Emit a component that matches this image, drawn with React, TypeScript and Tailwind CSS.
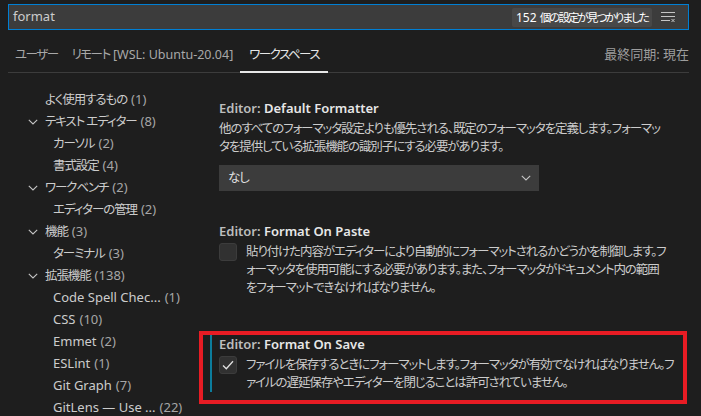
import React from 'react';

type TocItem = {
  label: string;
  count: string;
  level: 1 | 2;
  open?: boolean;
};

const toc: TocItem[] = [
  { label: 'よく使用するもの', count: '(1)', level: 1 },
  { label: 'テキスト エディター', count: '(8)', level: 1, open: true },
  { label: 'カーソル', count: '(2)', level: 2 },
  { label: '書式設定', count: '(4)', level: 2 },
  { label: 'ワークベンチ', count: '(2)', level: 1, open: true },
  { label: 'エディターの管理', count: '(2)', level: 2 },
  { label: '機能', count: '(3)', level: 1, open: true },
  { label: 'ターミナル', count: '(3)', level: 2 },
  { label: '拡張機能', count: '(138)', level: 1, open: true },
  { label: 'Code Spell Chec...', count: ' (1)', level: 2 },
  { label: 'CSS', count: '(10)', level: 2 },
  { label: 'Emmet', count: '(2)', level: 2 },
  { label: 'ESLint', count: '(1)', level: 2 },
  { label: 'Git Graph', count: '(7)', level: 2 },
  { label: 'GitLens — Use ...', count: '(22)', level: 2 },
];

// condensed Japanese run, closer to the narrow kana of the original UI font
const J = ({ children }: { children: React.ReactNode }) => (
  <span className="text-[12.5px] tracking-[-1.1px] [font-feature-settings:'palt']">{children}</span>
);

const TabJ = ({ children }: { children: React.ReactNode }) => (
  <span className="text-[12.5px] tracking-[-1.5px] [font-feature-settings:'palt']">{children}</span>
);

const isLatin = (s: string) => /^[\x00-\x7f—.]+$/.test(s);

const Chevron = ({ className }: { className?: string }) => (
  <svg width="10" height="6" viewBox="0 0 10 6" className={className}>
    <path d="M0.8 0.8 L5 5 L9.2 0.8" fill="none" stroke="#c5c5c5" strokeWidth="1.1" />
  </svg>
);

const ClearIcon = () => (
  <svg width="16" height="16" viewBox="0 0 16 16">
    <g stroke="#c5c5c5" strokeWidth="1" fill="none">
      <path d="M1 3.5 H15" />
      <path d="M1 7.5 H15" />
      <path d="M1 11.5 H10" />
      <path d="M11.5 10 L14.5 13 M14.5 10 L11.5 13" />
    </g>
  </svg>
);

const Checkbox = ({ checked }: { checked?: boolean }) => (
  <div className="w-[18px] h-[18px] shrink-0 rounded-[3px] bg-[#313131] border border-[#3c3c3c] flex items-center justify-center">
    {checked && (
      <svg width="14" height="14" viewBox="0 0 14 14">
        <path d="M2 7.5 L5.3 10.8 L12 3.2" fill="none" stroke="#e0e0e0" strokeWidth="1.3" />
      </svg>
    )}
  </div>
);

const Title = ({ name }: { name: string }) => (
  <div className="leading-[18px] font-semibold whitespace-nowrap">
    <span className="text-[#bdbdbd]">Editor: </span>
    <span className="text-[#e7e7e7]">{name}</span>
  </div>
);

const Lines = ({ lines }: { lines: string[] }) => (
  <div className="text-[#cccccc] leading-[18px] whitespace-nowrap text-[12.5px] tracking-[-1.1px] [font-feature-settings:'palt']">
    {lines.map((l) => (
      <div key={l}>{l}</div>
    ))}
  </div>
);

export default function App() {
  return (
    <div className="w-[701px] h-[416px] overflow-hidden bg-[#1e1e1e] text-[13px] text-[#cccccc] font-['Noto_Sans','Noto_Sans_CJK_JP',sans-serif]">
      <div className="pt-[4px] pl-[8px] pr-[12px]">
        <div className="h-[26px] border border-[#007fd4] bg-[#3c3c3c] flex items-center pl-[4px] pr-[12px]">
          <span className="text-[#cccccc]">format</span>
          <span className="ml-auto h-[19px] px-[4px] rounded-[2px] bg-[#484848] text-white text-[12px] leading-[19px] whitespace-nowrap">
            152 <span className="text-[11.5px] tracking-[-1.9px] [font-feature-settings:'palt']">個の設定が見つかりました</span>
          </span>
          <span className="ml-[8px] flex items-center">
            <ClearIcon />
          </span>
        </div>
        <div className="h-[43px] flex items-end border-b border-[#3c3c3c]">
          <div className="h-[34px] px-[7px] flex items-center text-[#a8a8a8]">
            <TabJ>ユーザー</TabJ>
          </div>
          <div className="h-[34px] px-[7px] flex items-center text-[#a8a8a8] whitespace-nowrap">
            <TabJ>リモート</TabJ>
            <span className="text-[12.5px]">&nbsp;[WSL: Ubuntu-20.04]</span>
          </div>
          <div className="h-[34px] px-[9px] flex items-center text-[#e7e7e7] border-b-2 border-[#e7e7e7] -mb-px">
            <TabJ>ワークスペース</TabJ>
          </div>
          <div className="ml-auto h-[34px] flex items-center text-[#9d9d9d]">最終同期: 現在</div>
        </div>
      </div>

      <div className="flex">
        <div className="w-[200px] shrink-0 pt-[16px]">
          {toc.map((item) => (
            <div
              key={item.label}
              className={`h-[22px] flex items-center whitespace-nowrap ${item.level === 2 ? 'pl-[53px]' : item.open ? 'pl-[28px]' : 'pl-[45px]'}`}
            >
              {item.level === 1 && item.open && (
                <span className="w-[17px] flex items-center">
                  <Chevron />
                </span>
              )}
              <span className="text-[#cccccc]">{isLatin(item.label) ? item.label : <J>{item.label}</J>}</span>
              <span className="ml-[4px] text-[#a6a6a6]">{item.count}</span>
            </div>
          ))}
        </div>

        <div className="flex-1 pl-[19px] pt-[26px]">
          <div>
            <Title name="Default Formatter" />
            <div className="mt-[3px]">
              <Lines
                lines={[
                  '他のすべてのフォーマッタ設定よりも優先される、既定のフォーマッタを定義します。フォーマッ',
                  'タを提供している拡張機能の識別子にする必要があります。',
                ]}
              />
            </div>
            <div className="mt-[9px] w-[320px] h-[26px] bg-[#3c3c3c] flex items-center pl-[9px] pr-[8px] text-[#e0e0e0]">
              <J>なし</J>
              <Chevron className="ml-auto" />
            </div>
          </div>

          <div className="mt-[31px]">
            <Title name="Format On Paste" />
            <div className="mt-[3px] flex gap-[9px]">
              <Checkbox />
              <Lines
                lines={[
                  '貼り付けた内容がエディターにより自動的にフォーマットされるかどうかを制御します。フ',
                  'ォーマッタを使用可能にする必要があります。また、フォーマッタがドキュメント内の範囲',
                  'をフォーマットできなければなりません。',
                ]}
              />
            </div>
          </div>

          <div className="mt-[34px] -ml-[20px] w-[488px] border-4 border-[#e81c24] pl-[7px] pb-[8px]">
            <div className="flex">
              <div className="w-[2px] shrink-0 bg-[#0c7d9d]" />
              <div className="pl-[7px]">
                <Title name="Format On Save" />
                <div className="mt-[3px] flex gap-[9px]">
                  <Checkbox checked />
                  <Lines
                    lines={[
                      'ファイルを保存するときにフォーマットします。フォーマッタが有効でなければなりません。フ',
                      'ァイルの遅延保存やエディターを閉じることは許可されていません。',
                    ]}
                  />
                </div>
              </div>
            </div>
          </div>
        </div>
      </div>
    </div>
  );
}
